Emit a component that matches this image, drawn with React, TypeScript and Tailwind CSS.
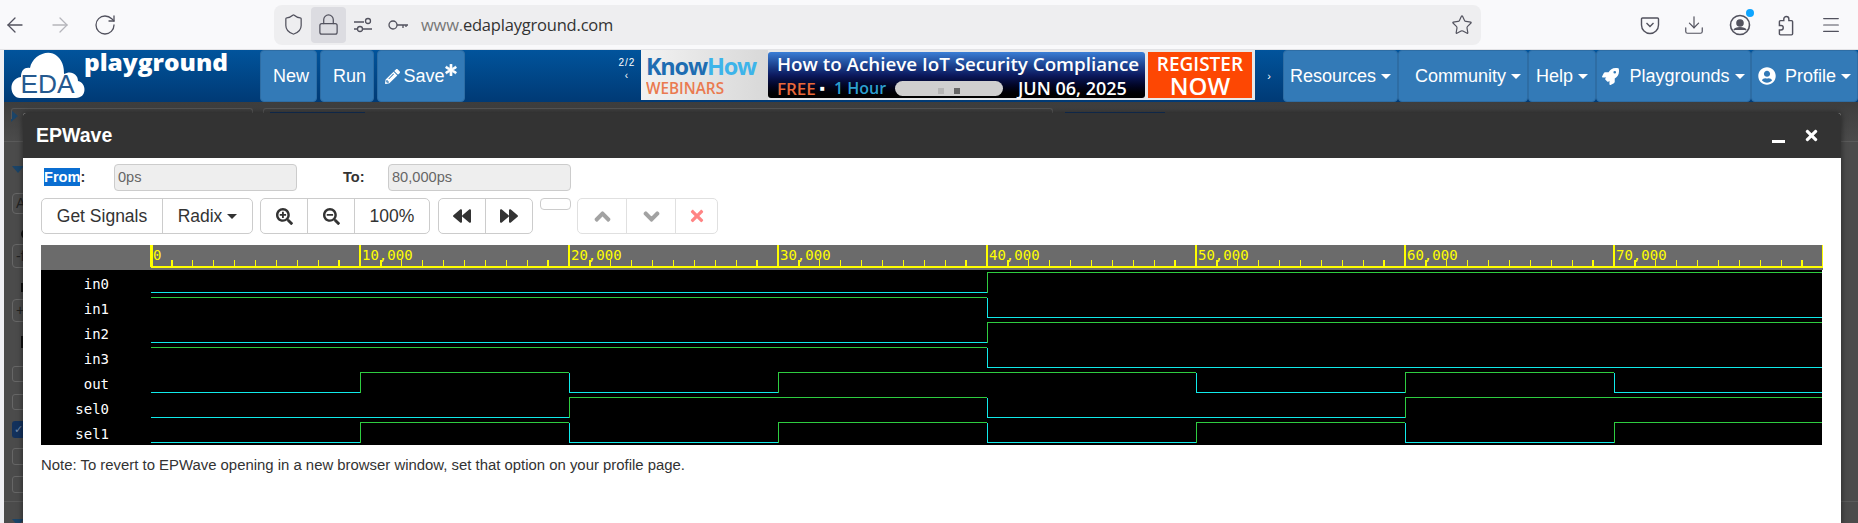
import React from 'react';
import {
  ArrowLeft,
  ArrowRight,
  Download,
  Lock,
  Menu,
  RotateCw,
  Shield,
  Star,
} from 'lucide-react';
import {
  FaAsterisk,
  FaBackward,
  FaChevronDown,
  FaChevronUp,
  FaForward,
  FaPencilAlt,
  FaRocket,
  FaSearchMinus,
  FaSearchPlus,
  FaTimes,
  FaUserCircle,
} from 'react-icons/fa';

const PX_PER_TICK = 20.9; // one tick is 1,000ps
const WAVE_X0 = 110;
const WAVE_WIDTH = 1781;

// value per 10,000ps step
const SIGNALS: { name: string; values: number[] }[] = [
  { name: 'in0', values: [0, 0, 0, 0, 1, 1, 1, 1] },
  { name: 'in1', values: [1, 1, 1, 1, 0, 0, 0, 0] },
  { name: 'in2', values: [0, 0, 0, 0, 1, 1, 1, 1] },
  { name: 'in3', values: [1, 1, 1, 1, 0, 0, 0, 0] },
  { name: 'out', values: [0, 1, 0, 1, 1, 0, 1, 0] },
  { name: 'sel0', values: [0, 0, 1, 1, 0, 0, 1, 1] },
  { name: 'sel1', values: [0, 1, 0, 1, 0, 1, 0, 1] },
];

const Caret = () => (
  <span className="inline-block w-0 h-0 ml-[5px] align-middle border-x-[5px] border-x-transparent border-t-[5px] border-t-current" />
);

const NavButton = ({ className, children }: { className: string; children: React.ReactNode }) => (
  <div className={`flex items-center justify-center h-full bg-[#337ab7] border border-[#2e6da4] rounded-[4px] text-white text-[18px] ${className}`}>
    {children}
  </div>
);

const Logo = () => (
  <svg width="230" height="52" viewBox="0 0 230 52" className="shrink-0 overflow-visible">
    <path
      d="M16 48 C6 48 3 29 17 27 C17 20 21 17 26 18 C28 6 44 -2 53 6 C60 12 60 20 60 24 C67 20 74 24 74 31 C83 33 83 48 72 48 Z"
      fill="#fff"
    />
    <text x="16.500" y="43" fill="#25598f" fontSize="25" fontFamily="'Liberation Sans', sans-serif" textLength="54" lengthAdjust="spacingAndGlyphs">EDA</text>
    <text x="80" y="21" fill="#fff" fontSize="22.500" fontWeight="800" fontFamily="'Open Sans', sans-serif" textLength="144" lengthAdjust="spacingAndGlyphs">playground</text>
  </svg>
);

const Banner = () => (
  <div className="flex h-[50px] w-[615px] bg-[#e8e8e8]">
    <div className="w-[127px] pl-[5px] pt-[2px] bg-gradient-to-r from-[#f2f2f2] to-[#d8d8d8] font-['Open_Sans',sans-serif] leading-none">
      <div className="text-[23.500px] font-bold tracking-[-1.2px] h-[27px] pt-[3px] whitespace-nowrap">
        <span className="text-[#1e6db2]">Know</span>
        <span className="text-[#3db4ea]">How</span>
      </div>
      <div className="text-[17px] font-semibold text-[#ea7a50] scale-x-90 origin-left">WEBINARS</div>
    </div>
    <div className="w-[377px] mt-[2px] mb-[2px] rounded-[3px] bg-gradient-to-b from-[#3b7fd6] via-[#0d1a60] to-black pl-[9px] font-['Open_Sans',sans-serif] font-semibold leading-none">
      <div className="text-white text-[18.800px] pt-[3px] h-[27px] whitespace-nowrap">How to Achieve IoT Security Compliance</div>
      <div className="flex items-center h-[18px]">
        <span className="text-[#e8683a] text-[17px] w-[43px]">FREE</span>
        <span className="text-white text-[8px] w-[14px]">■</span>
        <span className="text-[#2c9fd0] text-[16px] w-[61px] whitespace-nowrap">1 Hour</span>
        <div className="flex items-center justify-center gap-[10px] w-[108px] h-[15px] pt-[5px] rounded-full bg-[#cfcfcf]">
          <span className="w-[6px] h-[6px] bg-[#b5b5b5]" />
          <span className="w-[6px] h-[6px] bg-[#666]" />
        </div>
        <span className="text-white text-[18px] ml-[15px] whitespace-nowrap">JUN 06, 2025</span>
      </div>
    </div>
    <div className="flex flex-col items-center w-[104px] mx-[3px] my-[2px] bg-[#fd4703] text-white font-['Open_Sans',sans-serif] font-semibold leading-none">
      <span className="text-[19px] mt-[3px]">REGISTER</span>
      <span className="text-[24px]">NOW</span>
    </div>
  </div>
);

const BtnGroup = ({ widths, faded, children }: { widths: string; faded?: boolean; children: React.ReactNode }) => (
  <div className={`flex h-[36px] rounded-[5px] border border-[#ccc] divide-x divide-[#ccc] text-[#333] text-[17.500px] ${widths} ${faded ? 'opacity-60' : ''}`}>
    {children}
  </div>
);

const Cell = ({ className, children }: { className: string; children?: React.ReactNode }) => (
  <div className={`flex items-center justify-center h-full ${className}`}>{children}</div>
);

const Waveform = () => {
  const ticks = Array.from({ length: 81 }, (_, i) => i);
  return (
    <svg width={WAVE_WIDTH + 1} height="200" viewBox={`0 0 ${WAVE_WIDTH + 1} 200`}>
      <rect x="0" y="25" width={WAVE_WIDTH} height="175" fill="#000" />
      <rect x="0" y="0" width={WAVE_WIDTH + 1} height="25" fill="#6b6b6b" />
      {/* ruler */}
      <g stroke="#ffff00" shapeRendering="crispEdges">
        <line x1={WAVE_X0} y1="22" x2={WAVE_WIDTH + 1} y2="22" strokeWidth="1.600" />
        {ticks.map((i) => {
          const x = WAVE_X0 + i * PX_PER_TICK;
          const major = i % 10 === 0;
          return <line key={i} x1={x} x2={x} y1={major ? 0 : 15} y2="22" strokeWidth={i === 0 ? 3 : 1.3} />;
        })}
      </g>
      <g fill="#ffff00" fontSize="14" fontFamily="'DejaVu Sans Mono', monospace">
        {[0, 10000, 20000, 30000, 40000, 50000, 60000, 70000].map((t) => (
          <text key={t} x={WAVE_X0 + (t / 1000) * PX_PER_TICK + 2} y="15">{t.toLocaleString('en-US')}</text>
        ))}
      </g>
      {/* signals */}
      {SIGNALS.map((sig, row) => {
        const low = 47.5 + row * 25;
        const high = low - 20;
        const yOf = (v: number) => (v ? high : low);
        return (
          <g key={sig.name} shapeRendering="crispEdges" fill="none">
            <text x="68" y={44 + row * 25} textAnchor="end" fill="#fff" fontSize="14" fontFamily="'DejaVu Sans Mono', monospace">{sig.name}</text>
            {sig.values.map((v, i) => {
              const x1 = WAVE_X0 + i * 10 * PX_PER_TICK;
              const x2 = i === 7 ? WAVE_WIDTH : x1 + 10 * PX_PER_TICK;
              const prev = i > 0 ? sig.values[i - 1] : v;
              return (
                <g key={i} stroke={v ? '#2ecc40' : '#10eaea'} strokeWidth="1">
                  <line x1={x1} x2={x2} y1={yOf(v)} y2={yOf(v)} />
                  {prev !== v && <line x1={x1} x2={x1} y1={high} y2={low} />}
                </g>
              );
            })}
          </g>
        );
      })}
    </svg>
  );
};

const Modal = () => (
  <div className="absolute left-[19px] right-[17px] top-[11px] bottom-0 flex flex-col bg-white rounded-t-[3px] shadow-[0_0_6px_rgba(0,0,0,0.5)] font-['Liberation_Sans',sans-serif]">
    <div className="flex items-center justify-between h-[45px] shrink-0 bg-[#333] pl-[13px] pr-[22px] text-white rounded-t-[3px]">
      <span className="text-[19.500px] font-bold">EPWave</span>
      <div className="flex items-center gap-[19px]">
        <span className="block w-[13px] h-[3px] mt-[12px] bg-white" />
        <FaTimes className="w-[17px] h-[17px] -mx-[1px]" />
      </div>
    </div>
    <div className="pl-[18px] pt-[6px] text-[#333]">
      <div className="flex items-center h-[27px]">
        <div className="w-[73px] pl-[3px] text-[14.600px] font-bold">
          <span className="bg-[#0a6ed1] text-white py-px">From</span>:
        </div>
        <div className="flex items-center w-[183px] h-[27px] pl-[3px] bg-[#eee] border border-[#ccc] rounded-[4px] text-[#666] text-[14.600px]">0ps</div>
        <div className="w-[91px] pl-[46px] text-[14.600px] font-bold">To:</div>
        <div className="flex items-center w-[183px] h-[27px] pl-[3px] bg-[#eee] border border-[#ccc] rounded-[4px] text-[#666] text-[14.600px]">80,000ps</div>
      </div>
      <div className="flex items-start gap-[7px] mt-[7px]">
        <BtnGroup widths="w-[212px]">
          <Cell className="w-[121px]">Get Signals</Cell>
          <Cell className="flex-1">Radix<Caret /></Cell>
        </BtnGroup>
        <BtnGroup widths="w-[170px]">
          <Cell className="w-[47px]"><FaSearchPlus className="w-[17px] h-[17px]" /></Cell>
          <Cell className="w-[47px]"><FaSearchMinus className="w-[17px] h-[17px]" /></Cell>
          <Cell className="flex-1">100%</Cell>
        </BtnGroup>
        <div className="ml-px">
          <BtnGroup widths="w-[95px]">
            <Cell className="w-[47px]"><FaBackward className="w-[18px] h-[18px]" /></Cell>
            <Cell className="flex-1"><FaForward className="w-[18px] h-[18px]" /></Cell>
          </BtnGroup>
        </div>
        <div className="w-[31px] h-[12px] border border-[#ccc] rounded-[4px]" />
        <div className="-ml-px">
          <BtnGroup widths="w-[141px]" faded>
            <Cell className="w-[49px] text-[#666]"><FaChevronUp className="w-[17px] h-[17px] stroke-[40px]" /></Cell>
            <Cell className="w-[49px] text-[#666]"><FaChevronDown className="w-[17px] h-[17px] stroke-[40px]" /></Cell>
            <Cell className="flex-1 text-[#f33]"><FaTimes className="w-[18px] h-[18px]" /></Cell>
          </BtnGroup>
        </div>
      </div>
      <div className="mt-[11px]">
        <Waveform />
      </div>
      <p className="mt-[10px] text-[14.900px] leading-[20px]">
        Note: To revert to EPWave opening in a new browser window, set that option on your profile page.
      </p>
    </div>
  </div>
);

// dimmed page behind the modal, only its left edge and top sliver show
const Backdrop = () => (
  <div className="flex flex-col h-full pl-[8px] text-[#222] bg-[#4b4b4b] overflow-hidden">
    <div className="flex items-start h-[40px] shrink-0 border-b border-[#5a5a5a] -ml-[8px] pl-[7px] pt-[8px] bg-gradient-to-b from-[#3d3d3d] to-[#4b4b4b]">
      <span className="w-0 h-0 border-y-[6px] border-y-transparent border-l-[7px] border-l-[#1b4468]" />
      <div className="w-[242px] h-[11px] -mt-[2px] ml-[-7px] border border-b-0 border-[#555] rounded-t-[3px] pl-[22px] text-[17px] leading-[24px] whitespace-nowrap overflow-hidden">
        Languages &amp; Libraries
      </div>
      <div className="w-[790px] h-[11px] -mt-[2px] ml-[10px] border border-b-0 border-[#555] rounded-t-[3px] pl-[6px] pt-[3px]">
        <div className="w-[95px] h-[2px] bg-[#13315c]" />
      </div>
      <div className="w-[100px] h-[2px] mt-[2px] ml-[12px] bg-[#13315c]" />
    </div>
    <span className="w-0 h-0 mt-[24px] shrink-0 border-x-[6px] border-x-transparent border-t-[7px] border-t-[#1b4468]" />
    <div className="w-[30px] h-[21px] mt-[20px] shrink-0 border border-[#666] rounded-[4px] pl-[3px] text-[14px] leading-[19px]">A</div>
    <div className="w-[11px] h-[10px] mt-[15px] ml-[9px] shrink-0 rounded-l-full bg-[#111]" />
    <div className="w-[30px] h-[24px] mt-[5px] shrink-0 border border-[#666] rounded-[4px] pl-[3px] text-[14px] leading-[22px]">-f</div>
    <div className="w-[11px] h-[9px] mt-[15px] ml-[9px] shrink-0 bg-[#111]" />
    <div className="w-[30px] h-[23px] mt-[7px] shrink-0 border border-[#666] rounded-[4px] pl-[3px] text-[14px] leading-[21px]">+</div>
    <div className="w-[11px] h-[12px] mt-[14px] ml-[9px] shrink-0 bg-[#111]" />
    <div className="w-[30px] h-[16px] mt-[18px] shrink-0 border border-[#666] rounded-[3px]" />
    <div className="w-[30px] h-[16px] mt-[12px] shrink-0 border border-[#666] rounded-[3px]" />
    <div className="w-[30px] h-[17px] mt-[11px] shrink-0 bg-[#13315c] rounded-[3px] pl-[2px] text-[11px] leading-[17px] text-[#6f86a5]">✓</div>
    <div className="w-[30px] h-[17px] mt-[10px] shrink-0 border border-[#666] rounded-[3px]" />
    <div className="w-[30px] h-[17px] mt-[11px] shrink-0 border border-[#666] rounded-[3px]" />
    <div className="h-px mt-[8px] -ml-[8px] shrink-0 bg-[#5a5a5a]" />
    <span className="w-0 h-0 mt-[17px] shrink-0 border-x-[6px] border-x-transparent border-t-[7px] border-t-[#1b4468]" />
  </div>
);

export default function App() {
  return (
    <div className="flex flex-col w-[1858px] h-[523px] overflow-hidden bg-[#f0f0f4] font-['Liberation_Sans',sans-serif]">
      {/* browser toolbar */}
      <div className="flex items-center h-[50px] shrink-0 bg-[#f9f9fb] text-[#52525e] border-b border-[#e3e3e6]">
        <div className="flex items-center w-[274px] pl-[3px] gap-[21px]">
          <ArrowLeft size={24} strokeWidth={1.3} />
          <ArrowRight size={24} strokeWidth={1.3} className="text-[#b5b5bb]" />
          <RotateCw size={24} strokeWidth={1.3} />
        </div>
        <div className="flex items-center w-[1207px] h-[40px] rounded-lg bg-[#eeeef0] pl-[8px] pr-[8px]">
          <Shield size={23} strokeWidth={1.3} />
          <div className="flex items-center justify-center w-[35px] h-[36px] ml-[6px] rounded-[4px] bg-[#dcdce1]">
            <Lock size={23} strokeWidth={1.3} />
          </div>
          <svg width="20" height="20" viewBox="0 0 20 20" fill="none" stroke="currentColor" strokeWidth="1.300" className="ml-[7px]">
            <path d="M1 7h10M1 14h3M10 14h9" />
            <circle cx="15" cy="6" r="2.500" />
            <circle cx="7" cy="14" r="2.500" />
          </svg>
          <svg width="20" height="20" viewBox="0 0 20 20" fill="none" stroke="currentColor" strokeWidth="1.300" className="ml-[15px]">
            <circle cx="5" cy="10" r="4" />
            <path d="M9 10h11M15 10v3M18 10v2" />
          </svg>
          <span className="ml-[13px] mt-px text-[16.500px] font-['Open_Sans',sans-serif] text-[#333] tracking-[-0.2px]">
            <span className="text-[#777]">www.</span>edaplayground.com
          </span>
          <Star size={22} strokeWidth={1.3} className="ml-auto" />
        </div>
        <svg width="20" height="20" viewBox="0 0 20 20" fill="none" stroke="currentColor" strokeWidth="1.400" className="ml-[159px]">
          <path d="M2.500 3h15a1 1 0 0 1 1 1v6a8.500 8.500 0 0 1-17 0V4a1 1 0 0 1 1-1z" />
          <path d="M6.500 8l3.500 3.500L13.500 8" />
        </svg>
        <Download size={22} strokeWidth={1.3} className="ml-[23px]" />
        <div className="relative ml-[24px]">
          <svg width="22" height="22" viewBox="0 0 22 22" fill="none" stroke="currentColor" strokeWidth="1.600">
            <circle cx="11" cy="11" r="9.500" />
            <circle cx="11" cy="9" r="3" fill="currentColor" />
            <path d="M5 16c2-3 10-3 12 0" fill="currentColor" />
          </svg>
          <span className="absolute -top-[5px] -right-[3px] w-[8px] h-[8px] rounded-full bg-[#0ea5ff]" />
        </div>
        <svg width="22" height="22" viewBox="0 0 20 20" fill="none" stroke="currentColor" strokeWidth="1.300" className="ml-[24px]">
          <path d="M5 19a1 1 0 0 1-1-1v-3.500h1.500a2 2 0 0 0 0-4H4V7a1 1 0 0 1 1-1h3V4.500a2.300 2.300 0 0 1 4.600 0V6H15a1 1 0 0 1 1 1v11a1 1 0 0 1-1 1z" />
        </svg>
        <Menu size={22} strokeWidth={1.3} className="ml-[23px]" />
      </div>

      {/* site nav */}
      <div className="flex items-stretch h-[52px] shrink-0 ml-[4px] bg-gradient-to-b from-[#01549c] to-[#003a75]">
        <Logo />
        <div className="flex gap-[3px] ml-[26px]">
          <NavButton className="w-[57px] pl-[5px]">New</NavButton>
          <NavButton className="w-[54px] pl-[5px]">Run</NavButton>
          <NavButton className="w-[88px]">
            <FaPencilAlt className="w-[15px] h-[15px] mr-[3px]" />Save
            <FaAsterisk className="w-[12px] h-[12px] mb-[12px] stroke-[30px]" />
          </NavButton>
        </div>
        <div className="flex flex-col items-center justify-center w-[176px] pl-[148px] pb-[14px] text-white text-[10px] leading-[13px] tracking-[1px]">
          <span className="whitespace-nowrap">2/2</span>
          <span>‹</span>
        </div>
        <Banner />
        <div className="flex items-center justify-center w-[28px] text-white text-[11px]">›</div>
        <div className="flex">
          <NavButton className="w-[115px]">Resources<Caret /></NavButton>
          <NavButton className="w-[130px] pl-[10px]">Community<Caret /></NavButton>
          <NavButton className="w-[68px]">Help<Caret /></NavButton>
          <NavButton className="w-[155px]">
            <FaRocket className="w-[17px] h-[17px] mr-[10px]" />Playgrounds<Caret />
          </NavButton>
          <NavButton className="w-[107px]">
            <FaUserCircle className="w-[18px] h-[18px] mr-[9px]" />Profile<Caret />
          </NavButton>
        </div>
      </div>

      {/* page under the modal */}
      <div className="relative flex-1 ml-[4px]">
        <Backdrop />
        <Modal />
      </div>
    </div>
  );
}
